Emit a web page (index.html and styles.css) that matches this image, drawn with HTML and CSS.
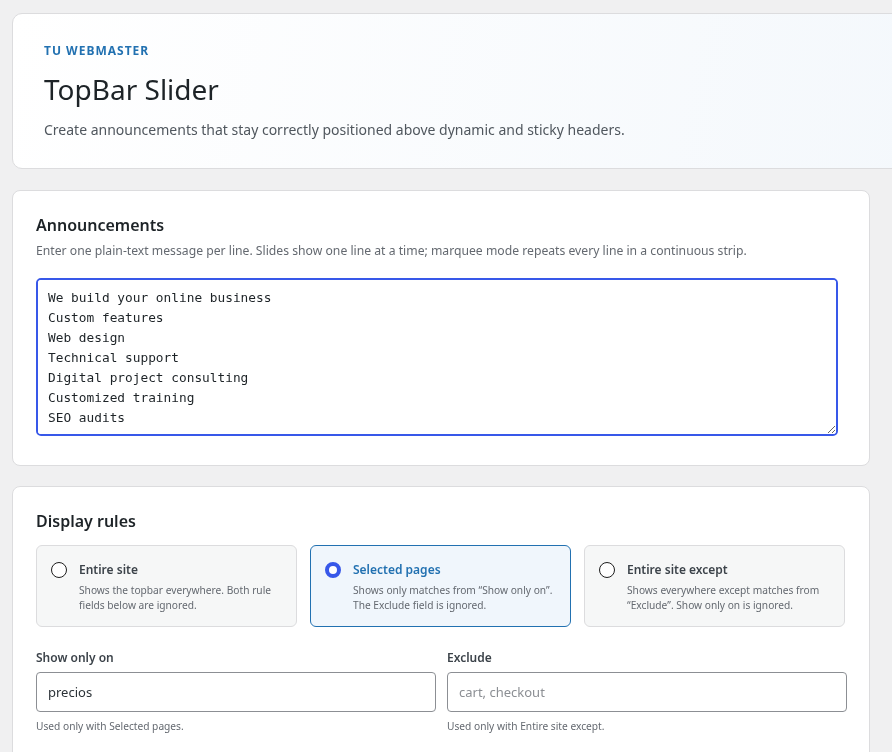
FILE: index.html
```html
<!DOCTYPE html>
<html>
<head>
  <title>TopBar Slider</title>
  <meta charset="UTF-8">
  <meta name="viewport" content="width=device-width, initial-scale=1.0">
  <link rel="stylesheet" href="styles.css">
</head>
<body>
  <div class="wrap">
    <!-- Header -->
    <div class="hero">
      <div class="eyebrow">TU WEBMASTER</div>
      <h1>TopBar Slider</h1>
      <p class="lead">Create announcements that stay correctly positioned above dynamic and sticky headers.</p>
    </div>

    <!-- Announcements -->
    <div class="card">
      <h2>Announcements</h2>
      <p class="desc">Enter one plain-text message per line. Slides show one line at a time; marquee mode repeats every line in a continuous strip.</p>
      <textarea class="messages" rows="7">We build your online business
Custom features
Web design
Technical support
Digital project consulting
Customized training
SEO audits</textarea>
    </div>

    <!-- Display rules -->
    <div class="card">
      <h2 class="rules-title">Display rules</h2>
      <div class="options">
        <label class="option">
          <span class="radio"></span>
          <span class="option-body">
            <span class="option-title">Entire site</span>
            <span class="option-desc">Shows the topbar everywhere. Both rule fields below are ignored.</span>
          </span>
        </label>
        <label class="option selected">
          <span class="radio"></span>
          <span class="option-body">
            <span class="option-title">Selected pages</span>
            <span class="option-desc">Shows only matches from “Show only on”. The Exclude field is ignored.</span>
          </span>
        </label>
        <label class="option">
          <span class="radio"></span>
          <span class="option-body">
            <span class="option-title">Entire site except</span>
            <span class="option-desc">Shows everywhere except matches from “Exclude”. Show only on is ignored.</span>
          </span>
        </label>
      </div>

      <div class="fields">
        <div class="field">
          <label for="showOn">Show only on</label>
          <input type="text" id="showOn" value="precios">
          <div class="help">Used only with Selected pages.</div>
        </div>
        <div class="field">
          <label for="exclude">Exclude</label>
          <input type="text" id="exclude" placeholder="cart, checkout">
          <div class="help">Used only with Entire site except.</div>
        </div>
      </div>
    </div>
  </div>
</body>
</html>
```

FILE: styles.css
```css
html, body { margin: 0; overflow: hidden; }
body { font-family: "Noto Sans", "Open Sans", sans-serif; background: #f0f0f1; color: #1d2327; }
.wrap { width: 858px; padding: 13px 0 0 12px; }

.hero { margin-right: -60px; padding: 29px 31px 28px; border: 1px solid #dcdcde; border-radius: 10px; background: linear-gradient(100deg, #ffffff 0%, #f4f8fc 100%); }
.eyebrow { font-size: 12px; font-weight: 700; letter-spacing: 1px; color: #2271b1; line-height: 16px; }
h1 { margin: 12px 0 0; font-size: 28px; font-weight: 400; line-height: 36px; color: #1d2327; }
.lead { margin: 13px 0 0; font-size: 14px; line-height: 20px; color: #50575e; }

.card { margin-top: 21px; padding: 22px 24px 29px 23px; background: #fff; border: 1px solid #dcdcde; border-radius: 8px; }
.card + .card { margin-top: 20px; }
h2 { margin: 0; font-size: 16px; font-weight: 600; line-height: 24px; color: #1d2327; }
.desc { margin: 5px 0 18px; font-size: 12.2px; line-height: 18px; color: #646970; }

.messages { display: block; box-sizing: border-box; width: 802px; height: 158px; margin: 0; padding: 8px 10px; border: 2px solid #3858e9; border-radius: 5px; font-family: "DejaVu Sans Mono", monospace; font-size: 12.8px; line-height: 20px; color: #1d2327; outline: none; resize: vertical; }

.rules-title { margin-bottom: 12px; }
.options { display: grid; grid-template-columns: repeat(3, 1fr); gap: 13px; }
.option { display: flex; gap: 12px; padding: 15px 14px 13px; background: #f6f7f7; border: 1px solid #dcdcde; border-radius: 6px; cursor: pointer; }
.option.selected { background: #f0f6fc; border-color: #2271b1; }
.radio { flex: none; box-sizing: border-box; width: 16px; height: 16px; margin-top: 1px; border: 1.5px solid #1e1e1e; border-radius: 50%; background: #fff; }
.selected .radio { border: 4.5px solid #3858e9; }
.option-body { display: flex; flex-direction: column; }
.option-title { font-size: 12px; font-weight: 600; line-height: 18px; color: #3c434a; }
.selected .option-title { color: #2271b1; }
.option-desc { margin-top: 4px; font-size: 10.2px; line-height: 15px; color: #646970; }

.fields { display: grid; grid-template-columns: 1fr 1fr; gap: 11px; margin: 21px -2px 0 0; }
.field label { display: block; font-size: 12px; font-weight: 600; line-height: 20px; color: #3c434a; }
.field input { display: block; box-sizing: border-box; width: 100%; height: 40px; margin-top: 4px; padding: 0 11px; border: 1px solid #8c8f94; border-radius: 4px; font-family: inherit; font-size: 13px; color: #2c3338; outline: none; }
.field input::placeholder { color: #8c8f94; }
.help { margin-top: 7px; font-size: 10.2px; line-height: 14px; color: #646970; }
```
